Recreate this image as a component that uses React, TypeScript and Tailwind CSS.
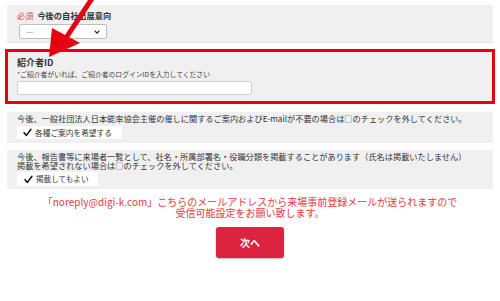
import React from 'react';

function Check() {
  return (
    <svg width="9" height="9" viewBox="0 0 10 10" className="shrink-0">
      <path d="M1.2 5.2 L3.8 8.2 L8.8 1.4" fill="none" stroke="#111" strokeWidth="1.7" strokeLinecap="round" strokeLinejoin="round" />
    </svg>
  );
}

export default function App() {
  return (
    <div
      className="relative w-[500px] h-[301px] overflow-hidden bg-white text-[#333]"
      style={{ fontFamily: '"Noto Sans CJK JP", "Noto Sans", sans-serif' }}
    >
      {/* 出展意向 */}
      <section className="mt-[5px] mx-[7px] h-[38px] bg-[#f0f0f0] border-b border-[#e2e2e2] pl-[10px] pt-[5px]">
        <div className="flex items-center gap-[4px] h-[11px] text-[8.2px] leading-[11px]">
          <span className="text-[#e8474f]">必須</span>
          <span className="font-bold">今後の自社出展意向</span>
        </div>
        <div className="mt-[3px] ml-[2px] w-[88px] h-[15px] bg-white border border-[#bdbdbd] rounded-[2px] flex items-center justify-between px-[6px]">
          <span className="text-[7px] text-[#666] leading-none">---</span>
          <svg width="6" height="4" viewBox="0 0 6 4">
            <path d="M0.6 0.6 L3 3.2 L5.4 0.6" fill="none" stroke="#222" strokeWidth="1.1" />
          </svg>
        </div>
      </section>

      {/* 紹介者ID */}
      <section className="mt-[6px] mx-[5px] h-[55px] border-[3px] border-[#e60012] bg-[#f0f0f0] pl-[9px] pt-[5px]">
        <div className="text-[9px] leading-[11px] font-bold">紹介者ID</div>
        <div className="mt-[2px] text-[6.8px] leading-[9px] text-[#444]">*ご紹介者がいれば、ご紹介者のログインIDを入力してください</div>
        <div className="mt-[2px] w-[235px] h-[14px] bg-white border border-[#d0d0d0] rounded-[2px]" />
      </section>

      {/* ご案内 */}
      <section className="mt-[8px] mx-[7px] h-[31px] bg-[#f0f0f0] pl-[10px] pt-[2px]">
        <div className="text-[8.2px] leading-[9px] whitespace-nowrap">今後、一般社団法人日本能率協会主催の催しに関するご案内およびE-mailが不要の場合は□のチェックを外してください。</div>
        <div className="mt-[3px] w-[105px] h-[13px] bg-white flex items-center gap-[3px] pl-[6px]">
          <Check />
          <span className="text-[7.7px] leading-none">各種ご案内を希望する</span>
        </div>
      </section>

      {/* 掲載 */}
      <section className="mt-[7px] mx-[7px] h-[39px] bg-[#f0f0f0] pl-[10px] pt-[2px]">
        <div className="text-[8.2px] leading-[9px] whitespace-nowrap">今後、報告書等に来場者一覧として、社名・所属部署名・役職分類を掲載することがあります（氏名は掲載いたしません）</div>
        <div className="text-[8.2px] leading-[9px] whitespace-nowrap">掲載を希望されない場合は□のチェックを外してください。</div>
        <div className="mt-[2px] w-[81px] h-[14px] bg-white flex items-center gap-[3px] pl-[7px]">
          <Check />
          <span className="text-[7.6px] leading-none">掲載してもよい</span>
        </div>
      </section>

      <div className="mt-[7px] text-center text-[10px] leading-[11px] text-[#e83a3f]">
        <div>「noreply@digi-k.com」こちらのメールアドレスから来場事前登録メールが送られますので</div>
        <div>受信可能設定をお願い致します。</div>
      </div>

      <div className="mt-[9px] flex justify-center">
        <button className="w-[68px] h-[31px] rounded-[3px] bg-[#dc2440] text-white text-[10px] font-bold shadow-[0_1px_2px_rgba(0,0,0,0.3)]">
          次へ
        </button>
      </div>

      {/* 注釈の矢印 */}
      <svg className="absolute left-0 top-0 pointer-events-none" width="120" height="70" viewBox="0 0 120 70">
        <line x1="93" y1="-3" x2="66" y2="38" stroke="#e60012" strokeWidth="5" />
        <polygon points="52,28 80,43 49,57" fill="#e60012" />
      </svg>
    </div>
  );
}
